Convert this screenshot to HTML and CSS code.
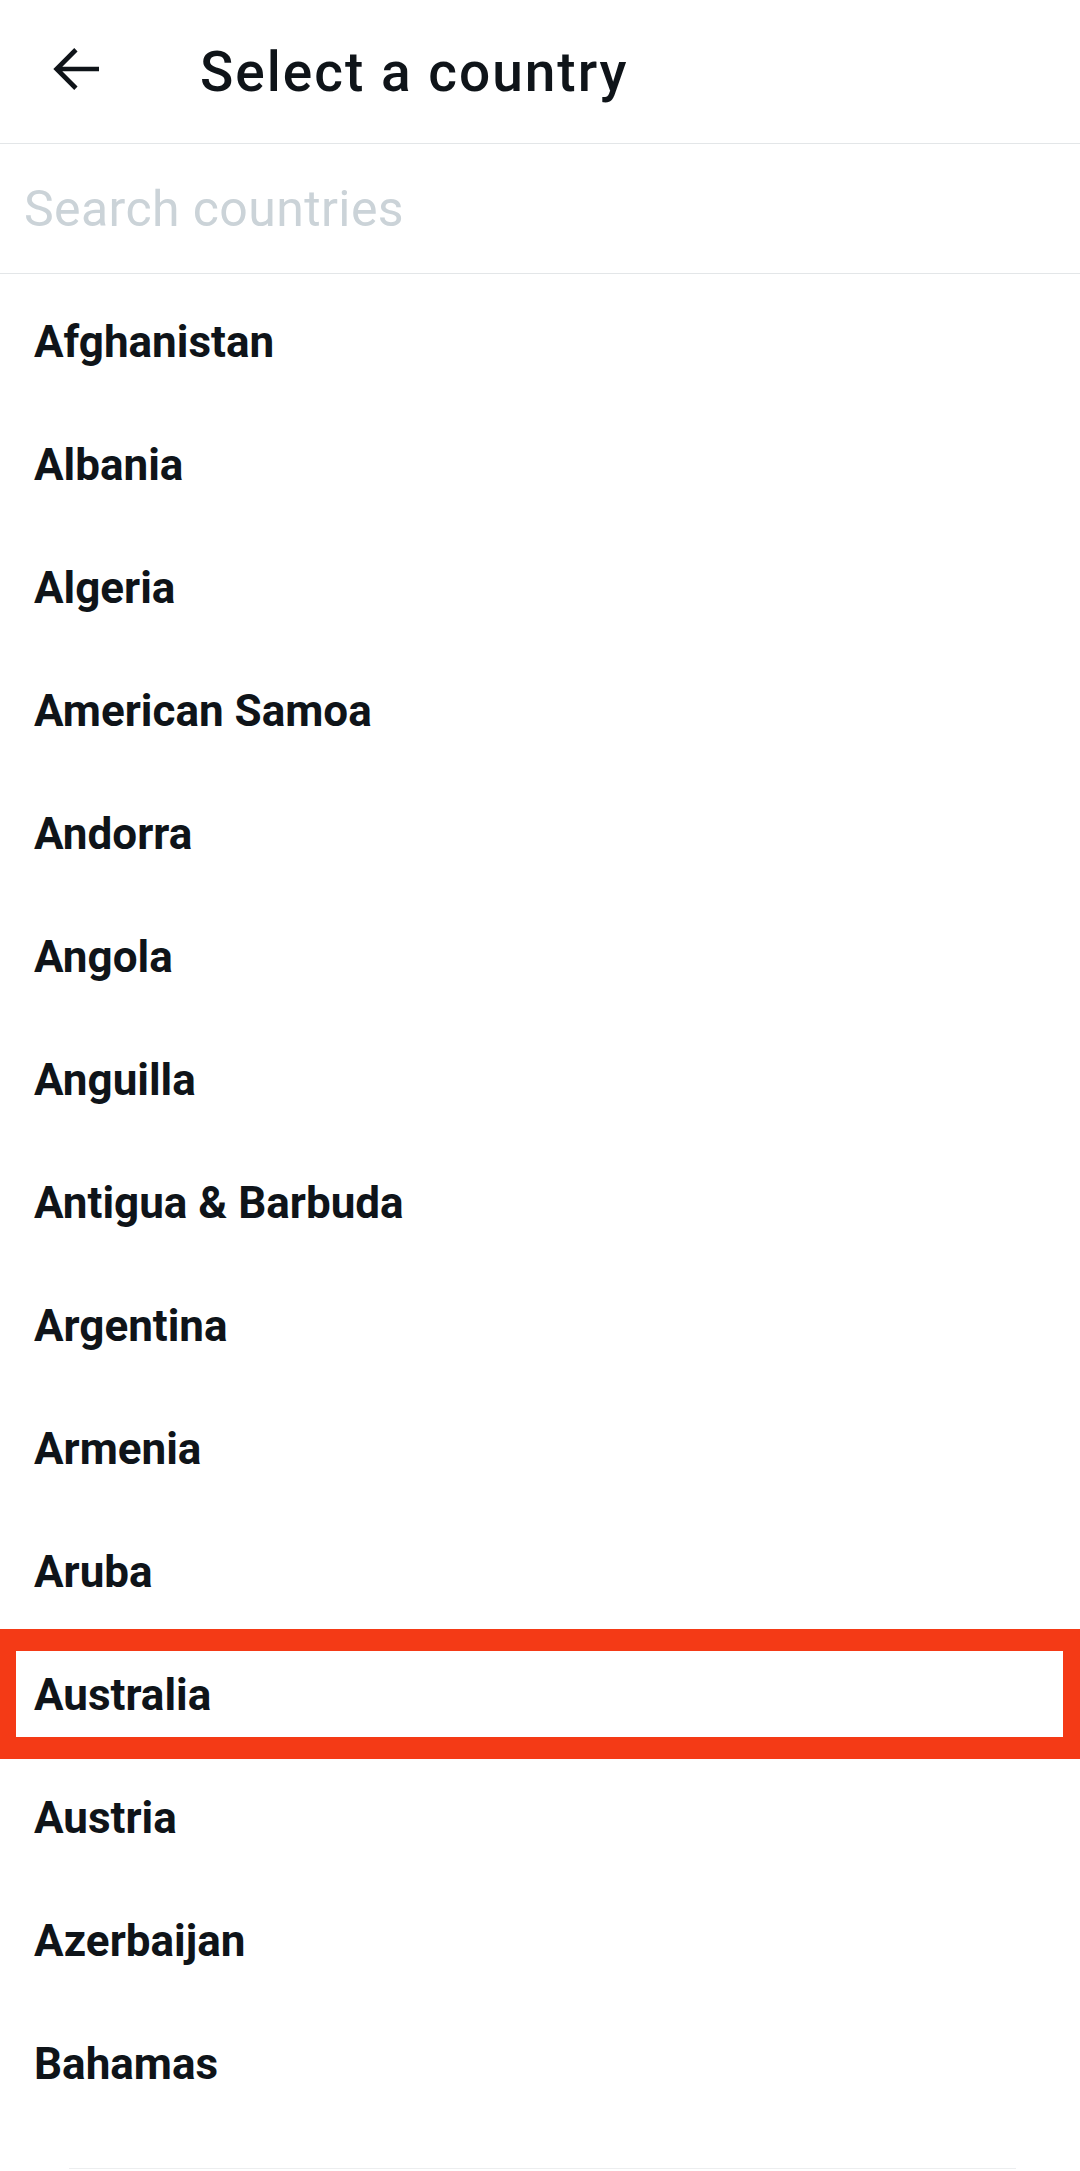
FILE: index.html
```html
<!DOCTYPE html>
<html>
<head>
    <title>Select a country</title>
    <link rel="stylesheet" href="styles.css">
</head>
<body>
    <div class="screen">
        <header class="top-bar">
            <svg class="back-icon" viewBox="0 0 24 24" width="66" height="66">
                <path d="M20 12H4.6M11.6 5L4.6 12l7 7" fill="none" stroke="#0f1419" stroke-width="1.7"/>
            </svg>
            <h1 class="title">Select a country</h1>
        </header>

        <div class="search">
            <input type="text" class="search-input" placeholder="Search countries">
        </div>

        <ul class="country-list">
            <li class="country">Afghanistan</li>
            <li class="country">Albania</li>
            <li class="country">Algeria</li>
            <li class="country">American Samoa</li>
            <li class="country">Andorra</li>
            <li class="country">Angola</li>
            <li class="country">Anguilla</li>
            <li class="country">Antigua &amp; Barbuda</li>
            <li class="country">Argentina</li>
            <li class="country">Armenia</li>
            <li class="country">Aruba</li>
            <li class="country selected">Australia<span class="highlight"></span></li>
            <li class="country">Austria</li>
            <li class="country">Azerbaijan</li>
            <li class="country">Bahamas</li>
        </ul>
        <div class="bottom-edge"></div>
    </div>
</body>
</html>
```

FILE: styles.css
```css
body {
    margin: 0;
    background-color: #fff;
    font-family: Roboto, "Liberation Sans", sans-serif;
    color: #0f1419;
}

.screen {
    width: 1080px;
    overflow: hidden;
}

.top-bar {
    display: flex;
    align-items: center;
    height: 144px;
    padding-left: 44px;
    border-bottom: 1px solid #e3e6e8;
    box-sizing: border-box;
}

.back-icon {
    margin-top: -6px;
    flex-shrink: 0;
}

.title {
    margin: 0 0 0 90px;
    font-size: 55px;
    font-weight: 500;
    letter-spacing: 2px;
}

.search {
    display: flex;
    align-items: center;
    height: 130px;
    border-bottom: 1px solid #e3e6e8;
    box-sizing: border-box;
}

.search-input {
    width: 100%;
    border: none;
    outline: none;
    padding: 0 0 0 24px;
    font-family: Roboto, "Liberation Sans", sans-serif;
    font-size: 50px;
    letter-spacing: 0.4px;
    color: #0f1419;
    background: transparent;
}

.search-input::placeholder {
    color: #cbd3d8;
}

.country-list {
    list-style: none;
    margin: 0;
    padding: 6px 0 0 0;
}

.country {
    position: relative;
    display: flex;
    align-items: center;
    height: 123px;
    padding-left: 34px;
    font-size: 44px;
    font-weight: 700;
}

.highlight {
    position: absolute;
    top: -4px;
    bottom: -3px;
    left: 0;
    right: 0;
    border: solid #f43a16;
    border-width: 22px 17px 22px 16px;
}

.bottom-edge {
    height: 1px;
    margin: 43px 64px 0 69px;
    background-color: #eceeef;
}
```
